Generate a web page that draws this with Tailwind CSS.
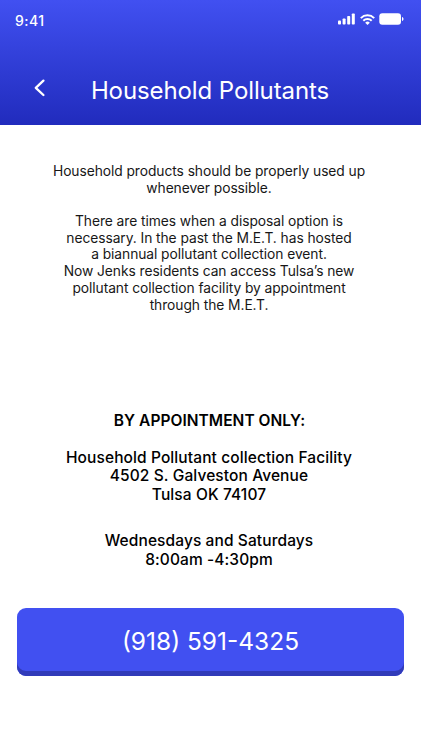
<!DOCTYPE html>
<html lang="en">
<head>
    <meta charset="UTF-8">
    <meta name="viewport" content="width=device-width, initial-scale=1.0">
    <title>Household Pollutants</title>
    <script src="https://cdn.jsdelivr.net/npm/@tailwindcss/browser@4"></script>
</head>
<body class="bg-white font-['Inter',sans-serif] text-black w-[422px] h-[750px] overflow-hidden">
    <!-- header -->
    <header class="w-[421px] h-[125.4px] bg-linear-to-b from-[#4150f1] to-[#212bbd] text-white">
      <div class="flex items-start justify-between h-[68px] pl-[15px] pr-[17px] pt-3">
        <span class="text-[14px] leading-[17px] font-medium tracking-[0.45px]">9:41</span>
        <div class="flex items-center pt-px">
          <svg class="w-[17px] h-3" viewBox="0 0 17 12" fill="currentColor">
            <rect x="0" y="7.5" width="3" height="4" rx="0.8"/>
            <rect x="4.6" y="5.5" width="3" height="6" rx="0.8"/>
            <rect x="9.2" y="3" width="3" height="8.5" rx="0.8"/>
            <rect x="13.8" y="0.5" width="3" height="11" rx="0.8"/>
          </svg>
          <svg class="w-[15px] h-[11px] ml-[5px]" viewBox="0 0 15 11" fill="none" stroke="currentColor" stroke-width="2">
            <path d="M0.8 4.1a9.5 9.5 0 0 1 13.4 0"/>
            <path d="M3.3 6.8a6 6 0 0 1 8.4 0"/>
            <path d="M7.5 11L5.2 8.7a3.3 3.3 0 0 1 4.6 0z" fill="currentColor" stroke="none"/>
          </svg>
          <svg class="w-[25px] h-3 ml-[4px]" viewBox="0 0 25 12" fill="currentColor">
            <rect x="0.3" y="0.2" width="21.7" height="11.6" rx="3"/>
            <path d="M23 4v4c.9-.3 1.5-1.1 1.5-2s-.6-1.7-1.5-2z"/>
          </svg>
        </div>
      </div>
      <div class="flex items-center h-[44px]">
        <button class="w-[80px] pl-[34px]">
          <svg class="w-[12px] h-[18px] -mt-1" viewBox="0 0 12 18" fill="none" stroke="currentColor" stroke-width="2.3" stroke-linecap="round" stroke-linejoin="round">
            <path d="M9.4 1.6L1.8 8.8l7.6 7.2"/>
          </svg>
        </button>
        <h1 class="w-[260px] pt-px text-center text-[24px] leading-[30px] tracking-[-0.1px] whitespace-nowrap">Household Pollutants</h1>
      </div>
    </header>

    <main class="w-[418px] text-center whitespace-nowrap">
      <div class="pt-[37.6px] text-[13.8px] leading-[16.7px] tracking-[-0.06px] text-neutral-900 h-[286.2px]">
        <p>Household products should be properly used up<br>whenever possible.</p>
        <p class="mt-[16.7px]">There are times when a disposal option is<br>necessary. In the past the M.E.T. has hosted<br>a biannual pollutant collection event.<br>Now Jenks residents can access Tulsa’s new<br>pollutant collection facility by appointment<br>through the M.E.T.</p>
      </div>
      <div class="text-[15.5px] leading-[18.6px] font-medium tracking-[0.1px] h-[196.1px]">
        <h2 class="pl-px font-semibold tracking-[0.04px]">BY APPOINTMENT ONLY:</h2>
        <p class="mt-[18.6px]">Household Pollutant collection Facility<br>4502 S. Galveston Avenue<br>Tulsa OK 74107</p>
        <p class="mt-[27.9px]">Wednesdays and Saturdays<br>8:00am -4:30pm</p>
      </div>
    </main>

    <button class="block ml-[17px] w-[387px] h-[68.6px] rounded-[9px] bg-[#4150f1] shadow-[inset_0_-5px_0_#313bb9] pb-px text-white text-[24.5px] leading-[30px]">(918) 591-4325</button>
</body>
</html>
